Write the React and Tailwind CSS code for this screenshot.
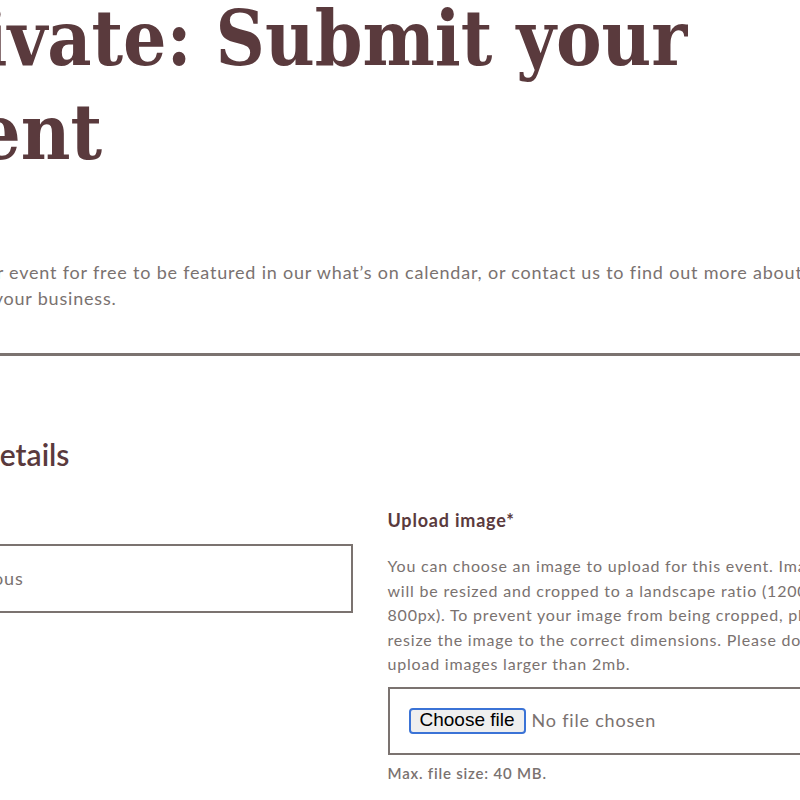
import React from 'react';

const App = () => {
  return (
    <div className="w-[800px] h-[800px] overflow-hidden bg-white font-['Lato',sans-serif] tracking-[0.05em]">
      <div className="ml-[-100px] w-[940px]">
        <h1 className="-mt-[8px] -ml-[6px] font-['DejaVu_Serif_Condensed','DejaVu_Serif',serif] font-bold text-[76px] leading-[94px] text-[#5a3a3d] tracking-normal">
          Private: Submit your event
        </h1>

        <p className="mt-[79px] text-[18px] leading-[26px] text-[#7a7270]">
          Submit your event for free to be featured in our what’s on calendar, or contact us to find out more about
          promoting your business.
        </p>

        <hr className="mt-[42px] border-0 h-[3px] bg-[#7b7370] w-[1000px]" />

        <h2 className="mt-[80px] text-[30px] leading-[36px] font-semibold text-[#5a3a3d] tracking-normal">Event details</h2>

        <div className="mt-[37px] grid grid-cols-2 gap-x-[35px]">
          {/* Left column */}
          <div>
            <label className="block text-[18px] leading-[22px] font-bold text-[#5a3a3d]">Title*</label>
            <div className="mt-[13px] h-[69px] border-2 border-[#7b7370] flex items-center px-5 text-[18px] text-[#7a7270]">
              Anonymous
            </div>
          </div>

          {/* Right column */}
          <div>
            <label className="block text-[18px] leading-[22px] font-bold text-[#5a3a3d]">Upload image*</label>
            <p className="mt-[23px] text-[16px] leading-[24.5px] text-[#7a7270]">
              You can choose an image to upload for this event. Images will be resized and cropped to a landscape
              ratio (1200 x 800px). To prevent your image from being cropped, please resize the image to the correct
              dimensions. Please do not upload images larger than 2mb.
            </p>
            <div className="mt-[10px] h-[68px] border-2 border-[#7b7370] flex items-center pl-[19px] gap-[6px]">
              <span className="h-[26px] w-[117px] flex items-center justify-center rounded-[4px] border-2 border-[#3b73d6] bg-[#efefef] font-['Liberation_Sans',sans-serif] text-[19px] text-black tracking-normal">
                Choose file
              </span>
              <span className="text-[18px] text-[#7a7270]">No file chosen</span>
            </div>
            <p className="mt-[7px] text-[15px] leading-[22px] font-semibold text-[#7a7270]">Max. file size: 40 MB.</p>
          </div>
        </div>
      </div>
    </div>
  );
};

export default App;
